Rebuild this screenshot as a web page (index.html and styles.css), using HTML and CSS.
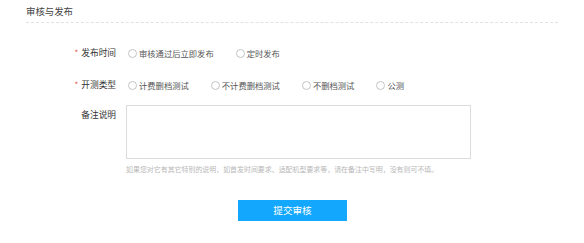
FILE: index.html
```html
<!DOCTYPE html>
<html lang="zh-CN">
<head>
<meta charset="utf-8">
<link rel="stylesheet" href="styles.css">
</head>
<body>
<div class="page">
  <div class="section-title">审核与发布</div>
  <div class="form">
    <div class="row">
      <div class="label"><span class="req">*</span>发布时间</div>
      <div class="field">
        <label class="radio"><span class="dot"></span><span class="rtext">审核通过后立即发布</span></label>
        <label class="radio"><span class="dot"></span><span class="rtext">定时发布</span></label>
      </div>
    </div>
    <div class="row row2">
      <div class="label"><span class="req">*</span>开测类型</div>
      <div class="field">
        <label class="radio"><span class="dot"></span><span class="rtext">计费删档测试</span></label>
        <label class="radio"><span class="dot"></span><span class="rtext">不计费删档测试</span></label>
        <label class="radio"><span class="dot"></span><span class="rtext">不删档测试</span></label>
        <label class="radio"><span class="dot"></span><span class="rtext">公测</span></label>
      </div>
    </div>
    <div class="row row3">
      <div class="label label-top">备注说明</div>
      <div class="field-col">
        <div class="textarea"></div>
        <div class="hint">如果您对它有其它特别的说明，如首发时间要求、适配机型要求等，请在备注中写明，没有则可不填。</div>
      </div>
    </div>
  </div>
  <div class="actions">
    <div class="btn">提交审核</div>
  </div>
</div>
</body>
</html>
```
FILE: styles.css
```css
html, body {
  margin: 0;
  padding: 0;
  background: #fff;
}
body {
  font-family: "Noto Sans CJK SC", "Noto Sans", sans-serif;
  color: #333;
  width: 584px;
  height: 243px;
  overflow: hidden;
}
.page {
  width: 584px;
}
.section-title {
  margin: 0 26px 0 26px;
  padding-top: 5px;
  height: 23px;
  box-sizing: border-box;
  font-size: 9.4px;
  line-height: 12px;
  color: #444;
  border-bottom: 1px dashed #e2e2e2;
}
.form {
  padding-left: 26px;
}
.row {
  display: flex;
  align-items: center;
  height: 16px;
  margin-top: 22px;
}
.row2 {
  margin-top: 16px;
}
.row3 {
  align-items: flex-start;
  height: auto;
  margin-top: 12px;
}
.label {
  width: 90px;
  padding-right: 10px;
  text-align: right;
  font-size: 8.7px;
  line-height: 16px;
  color: #333;
  flex-shrink: 0;
}
.label-top {
  padding-top: 2px;
}
.req {
  color: #e84848;
  font-size: 8px;
  margin-right: 3px;
}
.field {
  display: flex;
  align-items: center;
}
.radio {
  display: flex;
  align-items: center;
  margin-left: 2px;
  margin-right: 20px;
}
.dot {
  width: 9px;
  height: 9px;
  box-sizing: border-box;
  border: 1px solid #c4c4c4;
  border-radius: 50%;
  background: #fff;
  margin-right: 2px;
}
.rtext {
  font-size: 8.3px;
  line-height: 16px;
  color: #555;
  white-space: nowrap;
}
.field-col {
  display: flex;
  flex-direction: column;
}
.textarea {
  width: 345px;
  height: 54px;
  box-sizing: border-box;
  border: 1px solid #dcdcdc;
  background: #fff;
}
.hint {
  margin-top: 4px;
  font-size: 6.95px;
  line-height: 12px;
  color: #b8b8b8;
  white-space: nowrap;
}
.actions {
  display: flex;
  justify-content: center;
  margin-top: 25px;
}
.btn {
  width: 109px;
  height: 21px;
  background: #13a8fe;
  color: #fff;
  font-size: 9.6px;
  line-height: 21px;
  text-align: center;
  margin-left: 1px;
}
```
